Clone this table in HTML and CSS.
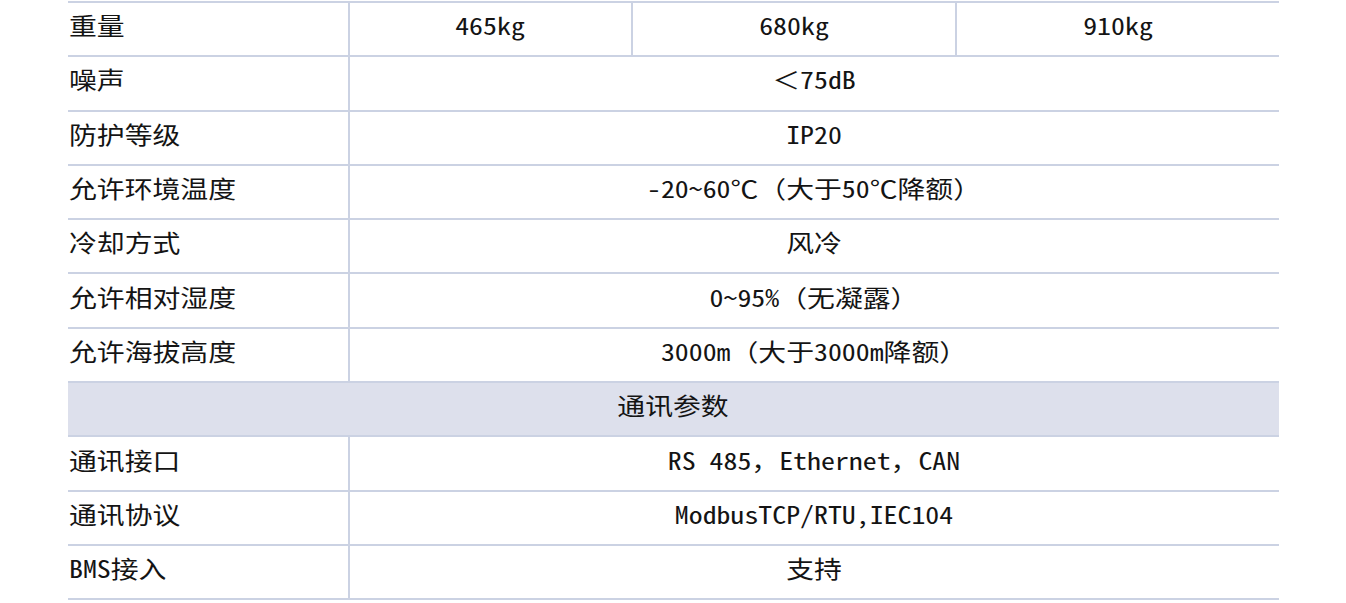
FILE: index.html
```html
<!DOCTYPE html>
<html lang="zh">
<head>
<meta charset="utf-8">
<title>参数表</title>
<link rel="stylesheet" href="styles.css">
</head>
<body>
<table class="spec">
  <colgroup>
    <col class="c-label">
    <col class="c-a">
    <col class="c-b">
    <col class="c-c">
  </colgroup>
  <tbody>
    <tr><td class="label"><span>重量</span></td><td><span>465kg</span></td><td><span>680kg</span></td><td><span>910kg</span></td></tr>
    <tr><td class="label"><span>噪声</span></td><td colspan="3"><span>＜75dB</span></td></tr>
    <tr><td class="label"><span>防护等级</span></td><td colspan="3"><span>IP20</span></td></tr>
    <tr><td class="label"><span>允许环境温度</span></td><td colspan="3"><span>-20~60℃（大于50℃降额）</span></td></tr>
    <tr><td class="label"><span>冷却方式</span></td><td colspan="3"><span>风冷</span></td></tr>
    <tr><td class="label"><span>允许相对湿度</span></td><td colspan="3"><span>0~95%（无凝露）</span></td></tr>
    <tr><td class="label"><span>允许海拔高度</span></td><td colspan="3"><span>3000m（大于3000m降额）</span></td></tr>
    <tr class="section"><td colspan="4"><span>通讯参数</span></td></tr>
    <tr><td class="label"><span>通讯接口</span></td><td colspan="3"><span>RS 485，Ethernet，CAN</span></td></tr>
    <tr><td class="label"><span>通讯协议</span></td><td colspan="3"><span>ModbusTCP/RTU,IEC104</span></td></tr>
    <tr><td class="label"><span>BMS接入</span></td><td colspan="3"><span>支持</span></td></tr>
  </tbody>
</table>
</body>
</html>
```

FILE: styles.css
```css
html, body {
  margin: 0;
  padding: 0;
  background: #ffffff;
}

.spec {
  margin: 1px auto 0;
  width: 1211px;
  table-layout: fixed;
  border-collapse: collapse;
  font-family: "Noto Sans Mono CJK SC", "Noto Sans CJK SC", "DejaVu Sans Mono", monospace;
  font-size: 24px;
  color: #141414;
}

.c-label { width: 281px; }
.c-a { width: 283px; }
.c-b { width: 324px; }
.c-c { width: 323px; }

.spec td {
  height: 52.3px;
  padding: 0;
  border-top: 2px solid #cbd2e3;
  border-bottom: 2px solid #cbd2e3;
  border-left: 2px solid #cbd2e3;
  text-align: center;
  vertical-align: middle;
  line-height: 1;
  white-space: nowrap;
}

.spec td:first-child {
  border-left: none;
}

.spec td span {
  display: inline-block;
  transform: scaleX(1.16);
  transform-origin: center;
  position: relative;
  top: -4px;
}

.spec td.label {
  text-align: left;
  padding-left: 1px;
}

.spec td.label span {
  transform-origin: left center;
}

.section td {
  background: #dde0ec;
}
```
